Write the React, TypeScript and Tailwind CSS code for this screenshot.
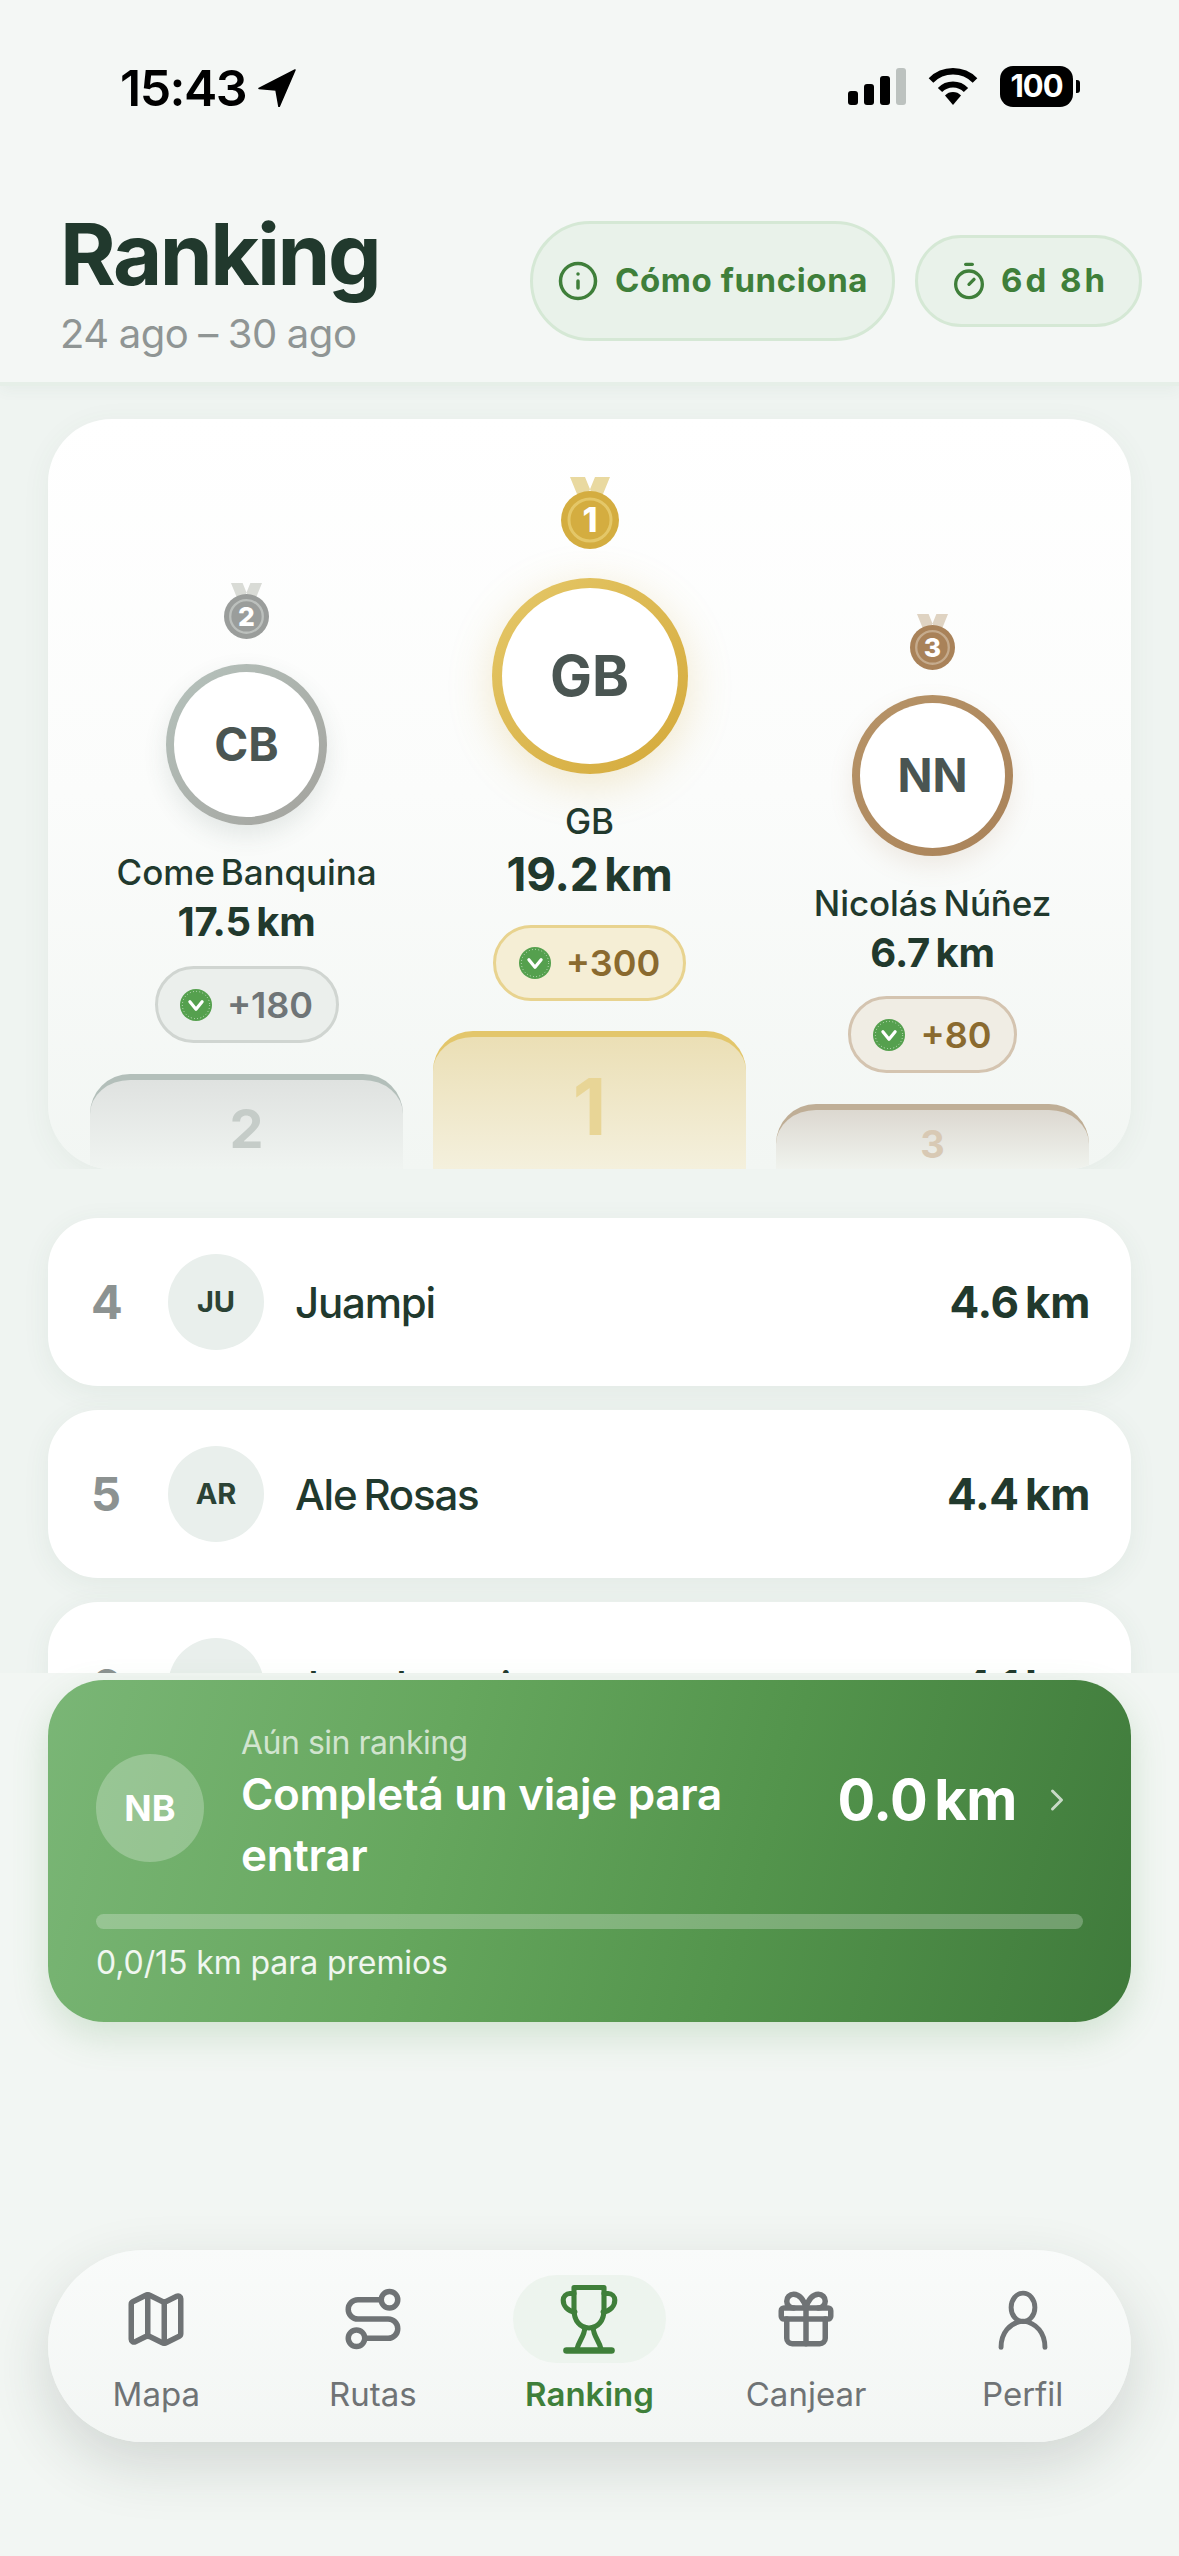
import { Map as MapIcon, Route, Gift, Info, Timer, ChevronRight } from 'lucide-react';

function Coin() {
  return (
    <svg viewBox="0 0 34 34" className="w-[32px] h-[32px] shrink-0">
      <circle cx="17" cy="17" r="17" fill="#55a04e" />
      <circle cx="17" cy="17" r="14.5" fill="none" stroke="#fff" strokeOpacity="0.7" strokeWidth="1" strokeDasharray="1 2.4" />
      <path d="M10.5 13.5 17 21.5l6.5-8" fill="none" stroke="#fff" strokeWidth="3.4" strokeLinecap="round" strokeLinejoin="round" />
    </svg>
  );
}

function Medal({ n, color, ring, ribbon, className }: { n: number; color: string; ring: string; ribbon: string; className: string }) {
  return (
    <svg viewBox="0 0 58 72" className={className}>
      <path d="M9 0h15l9 22H18zM49 0H34l-9 22h15z" fill={ribbon} />
      <circle cx="29" cy="43" r="29" fill={color} />
      <circle cx="29" cy="43" r="21" fill="none" stroke={ring} strokeWidth="3" />
      <text x="29" y="55" textAnchor="middle" fontSize="34" fontWeight="800" fill="#fff" fontFamily="Inter, sans-serif">{n}</text>
    </svg>
  );
}

function Stand({ medal, ring, initials, name, km, points, pill, pointsColor, stand, standNum }: {
  medal: React.ReactNode; ring: string; initials: React.ReactNode; name: string;
  km: React.ReactNode; points: string; pill: string; pointsColor: string; stand: string; standNum: React.ReactNode;
}) {
  return (
    <div className="flex-1 flex flex-col items-center">
      {medal}
      <div className={`rounded-full flex ${ring}`}>
        <div className="flex-1 rounded-full bg-white flex items-center justify-center">{initials}</div>
      </div>
      <div className="text-[#21392d] text-[35px] leading-[44px] font-medium tracking-[-0.1px] [word-spacing:-3px] whitespace-nowrap mt-[25px]">{name}</div>
      {km}
      <div className={`flex items-center justify-center gap-[15px] rounded-full border-[3px] ${pill}`}>
        <Coin />
        <span className={`text-[36px] font-semibold ${pointsColor}`}>{points}</span>
      </div>
      <div className={`w-full rounded-t-[40px] border-t-[6px] flex justify-center font-bold ${stand}`}>{standNum}</div>
    </div>
  );
}

function Row({ rank, initials, name, km }: { rank: string; initials: string; name: string; km: string }) {
  return (
    <div className="h-[168px] shrink-0 rounded-[50px] bg-white flex items-center pl-[43px] pr-[41px] shadow-[0_6px_28px_rgba(60,100,75,0.07)]">
      <span className="w-[77px] text-[47px] font-bold text-[#8c9291]">{rank}</span>
      <div className="w-[96px] h-[96px] rounded-full bg-[#e9efec] flex items-center justify-center text-[29px] font-bold text-[#2b4235]">{initials}</div>
      <span className="ml-[31px] flex-1 text-[42px] font-medium tracking-[-1.2px] [word-spacing:-3px] text-[#21392d]">{name}</span>
      <span className="text-[44px] font-bold tracking-[-0.3px] [word-spacing:-4px] text-[#21392d]">{km}</span>
    </div>
  );
}

function NavItem({ label, icon, active }: { label: string; icon: React.ReactNode; active?: boolean }) {
  return (
    <div className="flex flex-col items-center">
      <div className={`w-[153px] h-[88px] rounded-full flex items-center justify-center ${active ? 'bg-[#edf4ee] text-[#3f7f3a]' : 'text-[#6f7375]'}`}>{icon}</div>
      <span className={`mt-[11px] text-[33px] leading-[40px] ${active ? 'font-semibold text-[#3f7f3a]' : 'text-[#6f7375]'}`}>{label}</span>
    </div>
  );
}

export default function App() {
  return (
    <div className="w-[1179px] h-[2556px] overflow-hidden flex flex-col bg-[#f2f6f3] font-['Inter',sans-serif]">
      {/* Header with status bar */}
      <header className="h-[386px] shrink-0 bg-[#f4f7f5] border-b-[4px] border-[#e6efe8] shadow-[0_4px_14px_rgba(60,100,75,0.05)] flex flex-col relative z-10">
        <div className="h-[204px] shrink-0 flex justify-between items-start pt-[62px] pl-[120px] pr-[99px] text-black">
          <div className="flex items-center gap-[12px]">
            <span className="text-[50px] leading-[52px] font-semibold tracking-[-1.5px]">15:43</span>
            <svg viewBox="0 0 38 38" className="w-[38px] h-[38px]"><path d="M37 1 1 19.5 18 21l3 17z" fill="#000" stroke="#000" strokeWidth="1.5" strokeLinejoin="round" /></svg>
          </div>
          <div className="flex items-center gap-[21px] pt-[4px]">
            <div className="flex items-end gap-[6px] h-[37px]">
              <div className="w-[10px] h-[14px] rounded-[3px] bg-black" />
              <div className="w-[10px] h-[21px] rounded-[3px] bg-black" />
              <div className="w-[10px] h-[29px] rounded-[3px] bg-black" />
              <div className="w-[10px] h-[37px] rounded-[3px] bg-[#bcc2bf]" />
            </div>
            <svg viewBox="0 0 52 37" className="w-[52px] h-[37px]">
              <path d="M26 37 18 27.5a11 11 0 0 1 16 0z" fill="#000" />
              <path d="M13 22a18 18 0 0 1 26 0" fill="none" stroke="#000" strokeWidth="6" />
              <path d="M4 12.5a31 31 0 0 1 44 0" fill="none" stroke="#000" strokeWidth="6.5" />
            </svg>
            <div className="flex items-center">
              <div className="w-[73px] h-[41px] rounded-[13px] bg-black text-white text-[31px] font-bold tracking-[-1px] flex items-center justify-center">100</div>
              <div className="w-[4px] h-[13px] rounded-r-[3px] bg-black ml-[3px]" />
            </div>
          </div>
        </div>
        <div className="flex items-center justify-between pl-[60px] pr-[37px]">
          <div className="mt-[5px]">
            <h1 className="text-[85px] leading-[92px] font-bold tracking-[-2.5px] text-[#21392d]">Ranking</h1>
            <p className="text-[40px] leading-[48px] text-[#8f9594] tracking-[-0.4px] [word-spacing:-1px] mt-[9px]">24 ago – 30 ago</p>
          </div>
          <div className="flex items-center gap-[20px] text-[#3f7f3a] text-[33px] font-bold tracking-[0.6px]">
            <div className="h-[120px] w-[365px] rounded-[60px] border-[3px] border-[#d5e8d5] bg-[#e9f2ea] flex items-center justify-center gap-[16px]">
              <Info className="w-[42px] h-[42px]" strokeWidth={2} />
              <span>Cómo funciona</span>
            </div>
            <div className="h-[92px] w-[227px] rounded-[46px] border-[3px] border-[#d5e8d5] bg-[#e9f2ea] flex items-center justify-center gap-[12px]">
              <Timer className="w-[40px] h-[40px]" strokeWidth={2} />
              <span className="tracking-[3px]">6d 8h</span>
            </div>
          </div>
        </div>
      </header>

      {/* Podium */}
      <div className="px-[48px] pt-[33px] shrink-0 bg-[#eff4f1]">
        <section className="h-[750px] rounded-[64px] overflow-hidden bg-linear-to-b from-white via-[#fbfcfb] to-[#f2f6f3] flex items-end gap-[30px] px-[42px] shadow-[0_6px_30px_rgba(60,100,75,0.06)]">
          <Stand
            medal={<Medal n={2} color="#9a9d9b" ring="#bcc0bd" ribbon="#d9dbd6" className="w-[45px] h-[56px] mb-[25px]" />}
            ring="w-[161px] h-[161px] p-[8px] bg-[linear-gradient(135deg,#b6c3bd,#a3a29d)] shadow-[0_10px_24px_rgba(60,80,70,0.12)]"
            initials={<span className="text-[46px] font-bold text-[#4a5552]">CB</span>}
            name="Come Banquina"
            km={<div className="text-[40px] leading-[50px] font-bold tracking-[-0.2px] [word-spacing:-4px] text-[#21392d] mt-[3px]">17.5 km</div>}
            points="+180"
            pill="w-[184px] h-[77px] mt-[19px] bg-[#ebefec] border-[#d0d5d1]"
            pointsColor="text-[#6f7577]"
            stand="h-[95px] mt-[31px] border-[#b3bfba] bg-linear-to-b from-[#dfe2e0] to-[#f0f4f1] text-[#c5ccc8] text-[54px] leading-[98px]"
            standNum="2"
          />
          <Stand
            medal={<Medal n={1} color="#d4ad40" ring="#e4c768" ribbon="#e9d9a0" className="w-[58px] h-[72px] mb-[29px]" />}
            ring="w-[196px] h-[196px] p-[10px] bg-[linear-gradient(135deg,#e5c869,#d4a93a)] shadow-[0_10px_44px_rgba(212,173,64,0.25)]"
            initials={<span className="text-[56px] font-bold text-[#4a5552]">GB</span>}
            name="GB"
            km={<div className="text-[46px] leading-[56px] font-bold tracking-[-0.2px] [word-spacing:-5px] text-[#21392d] mt-[3px]">19.2 km</div>}
            points="+300"
            pill="w-[193px] h-[76px] mt-[23px] bg-[#f5eed5] border-[#e8d38f]"
            pointsColor="text-[#8a6a2f]"
            stand="h-[138px] mt-[30px] border-[#e3c66b] bg-linear-to-b from-[#ebdfb5] to-[#f4f0dd] text-[#e8d596] text-[78px] leading-[140px]"
            standNum="1"
          />
          <Stand
            medal={<Medal n={3} color="#a98259" ring="#c5ab8d" ribbon="#dfd3c2" className="w-[45px] h-[56px] mb-[25px]" />}
            ring="w-[161px] h-[161px] p-[8px] bg-[linear-gradient(135deg,#b79468,#a98259)] shadow-[0_10px_24px_rgba(169,130,89,0.14)]"
            initials={<span className="text-[46px] font-bold text-[#4a5552]">NN</span>}
            name="Nicolás Núñez"
            km={<div className="text-[40px] leading-[50px] font-bold tracking-[-0.2px] [word-spacing:-4px] text-[#21392d] mt-[3px]">6.7 km</div>}
            points="+80"
            pill="w-[169px] h-[77px] mt-[18px] bg-[#f0ede4] border-[#d4c4b0]"
            pointsColor="text-[#8a6a2f]"
            stand="h-[65px] mt-[31px] border-[#bfae96] bg-linear-to-b from-[#dcd8d0] to-[#f0f3ee] text-[#d8c9b4] text-[38px] leading-[68px]"
            standNum="3"
          />
        </section>
      </div>

      {/* List, cut by the card below */}
      <div className="h-[504px] shrink-0 overflow-hidden px-[48px] pt-[49px] flex flex-col gap-[24px] bg-[#eff4f1]">
        <Row rank="4" initials="JU" name="Juampi" km="4.6 km" />
        <Row rank="5" initials="AR" name="Ale Rosas" km="4.4 km" />
        <Row rank="6" initials="JI" name="Juan Ignacio" km="4.1 km" />
      </div>

      {/* Own position */}
      <div className="px-[48px] pt-[7px] shrink-0">
        <div className="h-[342px] rounded-[56px] bg-[linear-gradient(105deg,#7ab676_0%,#66a75e_35%,#53944c_65%,#3f7a3b_100%)] shadow-[0_14px_36px_rgba(80,150,80,0.2)] pt-[44px] px-[48px] text-white flex flex-col">
          <div className="flex items-center h-[168px]">
            <div className="w-[108px] h-[108px] rounded-full bg-white/25 flex items-center justify-center text-[36px] font-bold shrink-0">NB</div>
            <div className="ml-[37px] flex-1 -mt-[8px]">
              <div className="text-[32px] leading-[42px] text-white/70 tracking-[-0.5px]">Aún sin ranking</div>
              <div className="text-[44px] leading-[61px] font-semibold tracking-[-0.3px] w-[520px]">Completá un viaje para entrar</div>
            </div>
            <span className="text-[56px] font-bold tracking-[-0.4px] [word-spacing:-6px] -mt-[16px]">0.0 km</span>
            <ChevronRight className="w-[36px] h-[36px] ml-[22px] mr-[8px] -mt-[16px] text-white/70" strokeWidth={2} />
          </div>
          <div className="h-[15px] rounded-full bg-white/25 mt-[22px]" />
          <div className="mt-[14px] text-[32px] leading-[40px] text-white/90 tracking-[-0.1px]">0,0/15 km para premios</div>
        </div>
      </div>

      {/* Bottom nav */}
      <div className="px-[48px] pt-[228px] shrink-0">
        <nav className="h-[192px] rounded-[96px] bg-linear-to-b from-[#f9fbfa] to-[#f3f6f4] grid grid-cols-5 pt-[25px] shadow-[0_22px_60px_rgba(40,50,45,0.16)]">
          <NavItem label="Mapa" icon={<MapIcon className="w-[66px] h-[66px]" strokeWidth={2} />} />
          <NavItem label="Rutas" icon={<Route className="w-[66px] h-[66px]" strokeWidth={2} />} />
          <NavItem
            active
            label="Ranking"
            icon={
              <svg viewBox="0 0 24 24" className="w-[72px] h-[72px]" fill="none" stroke="currentColor" strokeWidth="1.7" strokeLinecap="round" strokeLinejoin="round">
                <path d="M7 1.5h10v7.5c0 3.5-2 6-5 6s-5-2.5-5-6z" />
                <path d="M7 3.5H5.6a2.2 2.2 0 0 0-2.2 2.2c0 2 1.5 3.6 3.9 4M17 3.5h1.4a2.2 2.2 0 0 1 2.2 2.2c0 2-1.5 3.6-3.9 4" />
                <path d="M10.6 14.8c0 2.8-2 4.4-2.6 7.2M13.4 14.8c0 2.8 2 4.4 2.6 7.2" />
                <path d="M4.5 22.5h15" strokeWidth="2.2" />
              </svg>
            }
          />
          <NavItem label="Canjear" icon={<Gift className="w-[66px] h-[66px]" strokeWidth={2} />} />
          <NavItem
            label="Perfil"
            icon={
              <svg viewBox="0 0 24 24" className="w-[62px] h-[62px]" fill="none" stroke="currentColor" strokeWidth="1.9" strokeLinecap="round">
                <ellipse cx="12" cy="7.5" rx="4.6" ry="5.5" />
                <path d="M3.5 23c0-5.5 3.2-9.6 8.5-10.2 5.3.6 8.5 4.7 8.5 10.2" />
              </svg>
            }
          />
        </nav>
      </div>
    </div>
  );
}
